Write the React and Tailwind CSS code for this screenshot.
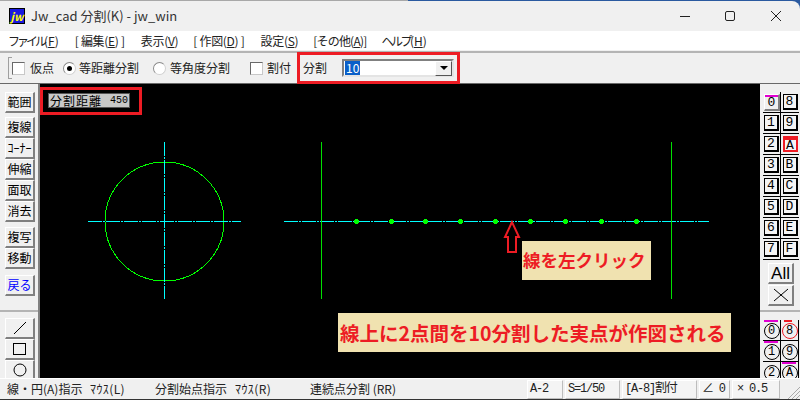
const JP = { fontFamily: '"Noto Sans CJK JP", sans-serif' }
const MONO = { fontFamily: '"Liberation Mono", "Noto Sans CJK JP", monospace' }

// Raised face shared by the side toolbar buttons
const RAISED = 'flex items-center justify-center shrink-0 bg-[#f0f0f0] border-t border-l border-t-white border-l-white border-r-2 border-b-2 border-r-[#808080] border-b-[#808080]'

const MENU = [
  { kana: 'ファイル', open: '(', key: 'F', close: ')', cls: 'ml-2', kanaCls: 'tracking-[-3px]' },
  { open: '[ 編集(', key: 'E', close: ') ]', cls: 'ml-4 tracking-[-0.3px]' },
  { open: '表示(', key: 'V', close: ')', cls: 'ml-4 tracking-[-0.3px]' },
  { open: '[ 作図(', key: 'D', close: ') ]', cls: 'ml-[15px] tracking-[-0.3px]' },
  { open: '設定(', key: 'S', close: ')', cls: 'ml-4 tracking-[-0.3px]' },
  { open: '[その他(', key: 'A', close: ')]', cls: 'ml-[15px] tracking-[-0.8px]' },
  { kana: 'ヘルプ', open: '(', key: 'H', close: ')', cls: 'ml-[15px]', kanaCls: 'tracking-[-2.5px]' },
]

const DOTS = [356, 391, 425, 460, 495, 530, 565, 601, 636]

const KEYS = [
  ['0', '8'], ['1', '9'], ['2', 'A'], ['3', 'B'],
  ['4', 'C'], ['5', 'D'], ['6', 'E'], ['7', 'F'],
]

function SideBtn({ children, className = '' }) {
  return <div className={`${RAISED} w-[30px] h-[21px] text-[12px] leading-none whitespace-nowrap ${className}`}>{children}</div>
}

function Check({ className = '' }) {
  return <span className={`w-[13px] h-[13px] bg-white border border-t-[#696969] border-l-[#696969] border-r-[#c8c8c8] border-b-[#c8c8c8] ${className}`} />
}

function Radio({ on, className = '' }) {
  return (
    <span className={`w-[13px] h-[13px] rounded-full bg-white border border-t-[#8a8a8a] border-l-[#8a8a8a] border-r-[#d0d0d0] border-b-[#d0d0d0] flex items-center justify-center ${className}`}>
      {on && <span className="w-[5px] h-[5px] rounded-full bg-black" />}
    </span>
  )
}

function Key({ label, first, hot }) {
  if (first) {
    return (
      <div className="w-[18px] h-[21px] pl-px pt-[2px] border-r border-b border-black">
        <div className={`${RAISED} relative w-[16px] h-[17px] text-[13px] leading-none`} style={MONO}>
          <span className="absolute left-0 right-0 top-0 h-[2px] bg-[#e000d0]" />
          {label}
        </div>
      </div>
    )
  }
  return (
    <div className={`w-[18px] h-[21px] flex items-center justify-center border-b border-black ${label.match(/[0-7]/) ? 'border-r' : ''}`}>
      <div className={`w-[15px] h-[16px] flex items-center justify-center text-[13px] leading-none bg-[#f4f4f4] text-black ${hot ? 'border-2 border-t-4 border-[#ed1c24] text-[12px]' : 'border border-r-2 border-b-2 border-black'}`} style={MONO}>
        {label}
      </div>
    </div>
  )
}

function CircleKey({ label, magenta, red }) {
  return (
    <div className="relative w-[18px] h-[21px] flex items-center justify-center border-b border-r border-black bg-[#f0f0f0]">
      {magenta && <span className="absolute left-[1px] right-[2px] top-0 h-[2px] bg-[#e000d0]" />}
      {red && <span className="absolute left-[3px] w-[8px] top-0 h-[2px] bg-[#ed1c24]" />}
      <span className={`w-[16px] h-[16px] mt-[2px] rounded-full border flex items-center justify-center text-[12px] leading-none ${red ? 'border-[#ed1c24]' : 'border-black'}`} style={MONO}>
        {label}
      </span>
    </div>
  )
}

function StatusCell({ children, className = '' }) {
  return <div className={`h-[19px] flex items-center pl-[2px] border-t border-l border-white border-r border-r-[#bdbdbd] border-b border-b-[#bdbdbd] bg-[#f4f4f4] text-[12px] tracking-[-1.2px] ${className}`} style={MONO}>{children}</div>
}

function Drawing() {
  return (
    <svg className="absolute inset-0" width="720" height="294" viewBox="40 84 720 294" shapeRendering="crispEdges" fill="none">
      {/* circle with its two centre lines */}
      <circle cx="164.5" cy="221.5" r="59.5" stroke="#00ff00" />
      <path d="M88 221.5H241" stroke="#00ffff" strokeDasharray="14 1 2 1" />
      <path d="M164.5 142V299" stroke="#00ffff" strokeDasharray="14 1 2 1" />
      {/* divided line */}
      <path d="M284 221.5H709" stroke="#00ffff" strokeDasharray="14 1 2 1" />
      <path d="M321.5 142V299M671.5 142V299" stroke="#00e000" />
      {DOTS.map((x) => (
        <path key={x} d={`M${x - 1} 219h3v1h1v3h-1v1h-3v-1h-1v-3h1z`} fill="#00ff00" />
      ))}
      {/* arrow pointing at the line */}
      <path d="M512 222L505 237H508V252H516V237H519Z" stroke="#ed1c24" strokeWidth="2" shapeRendering="auto" />
    </svg>
  )
}

export default function App() {
  return (
    <div className="w-[800px] h-[400px] overflow-hidden bg-[#2a5aa0] text-[#1a1a1a]" style={JP}>
      <div className="w-[408px] h-px bg-[#a8a8a8]" />
      <div className="h-[398px] flex flex-col bg-[#f0f0f0] rounded-tr-[8px] overflow-hidden">
        {/* title bar */}
        <div className="h-[30px] flex items-center shrink-0">
          <div className="ml-[9px] w-[16px] h-[16px] bg-[#1a1ae0] border border-black flex items-center justify-center text-[#ffff00] text-[11px] font-bold italic leading-none">jw</div>
          <span className="ml-[6px] text-[13px] text-[#333]">Jw_cad 分割(K) - jw_win</span>
          <svg className="ml-auto mr-[14px]" width="106" height="12" viewBox="0 0 106 12" fill="none" stroke="#222">
            <path d="M0 6.5H10" />
            <rect x="45.5" y="1.5" width="9" height="9" rx="1.5" />
            <path d="M91 1L101 11M101 1L91 11" />
          </svg>
        </div>

        {/* menu */}
        <div className="h-[19px] bg-white flex items-center text-[12px] text-[#222] shrink-0 whitespace-nowrap">
          {MENU.map((m) => (
            <span key={m.key} className={m.cls}>
              {m.kana && <span className={m.kanaCls}>{m.kana}</span>}
              {m.open}<span className="underline">{m.key}</span>{m.close}
            </span>
          ))}
        </div>

        {/* option toolbar */}
        <div className="relative mt-[1px] h-[33px] border-t-2 border-[#b4b4b4] border-b border-b-[#696969] flex items-center text-[12px] text-[#222] shrink-0 whitespace-nowrap">
          <span className="ml-[8px] w-[4px] h-[22px] border-l border-t border-b border-[#a0a0a0]" />
          <Check />
          <span className="ml-[5px]">仮点</span>
          <Radio on className="ml-[9px]" />
          <span className="ml-[3px]">等距離分割</span>
          <Radio className="ml-[14px]" />
          <span className="ml-[4px]">等角度分割</span>
          <Check className="ml-[20px]" />
          <span className="ml-[4px]">割付</span>
          <span className="ml-[12px]">分割</span>
          <div className="ml-[15px] w-[112px] h-[18px] bg-white border-2 border-t-[#808080] border-l-[#808080] border-r-[#e4e4e4] border-b-[#e4e4e4] flex items-center">
            <span className="ml-[1px] h-[14px] px-px bg-[#0a5fc8] text-white text-[12px] leading-[14px]">10</span>
            <span className="ml-auto w-[17px] h-[15px] bg-[#f0f0f0] border border-t-white border-l-white border-r-[#555] border-b-[#555] flex items-center justify-center">
              <span className="w-0 h-0 border-l-[4px] border-r-[4px] border-t-[4px] border-l-transparent border-r-transparent border-t-black" />
            </span>
          </div>
          <div className="absolute left-[297px] -top-px w-[163px] h-[32px] border-[3px] border-[#ed1c24]" />
        </div>

        <div className="flex-1 flex min-h-0">
          {/* left tools */}
          <div className="w-[40px] shrink-0 flex flex-col items-start pl-[5px] pt-[8px] border-r-2 border-[#808080] overflow-hidden text-black">
            <SideBtn>範囲</SideBtn>
            <SideBtn className="mt-[4px]">複線</SideBtn>
            <SideBtn className="text-[10px]">ｺｰﾅｰ</SideBtn>
            <SideBtn>伸縮</SideBtn>
            <SideBtn>面取</SideBtn>
            <SideBtn>消去</SideBtn>
            <SideBtn className="mt-[5px]">複写</SideBtn>
            <SideBtn>移動</SideBtn>
            <SideBtn className="mt-[6px] text-[#0000ff]">戻る</SideBtn>
            <div className="w-[40px] -ml-[5px] mt-[14px] shrink-0 border-t-2 border-[#b4b4b4]" />
            <SideBtn className="mt-[6px]">
              <svg width="14" height="14" viewBox="0 0 14 14" stroke="#000" fill="none"><path d="M1 13L13 1" /></svg>
            </SideBtn>
            <SideBtn>
              <svg width="15" height="14" viewBox="0 0 15 14" stroke="#000" fill="none"><rect x="1.5" y="1.5" width="12" height="11" /></svg>
            </SideBtn>
            <SideBtn>
              <svg width="14" height="14" viewBox="0 0 14 14" stroke="#000" fill="none"><circle cx="7" cy="7" r="6" /></svg>
            </SideBtn>
          </div>

          {/* drawing area */}
          <div className="relative w-[720px] bg-black shrink-0 overflow-hidden">
            <Drawing />
            <div className="absolute left-[8px] top-[9px] w-[82px] h-[15px] bg-[#c8c8c8] border border-[#555] flex items-center justify-between pl-[1px] pr-[1px] text-[12px] leading-none text-black whitespace-nowrap">
              <span className="tracking-[1px]">分割距離</span>
              <span className="text-[10px]" style={MONO}>450</span>
            </div>
            <div className="absolute left-0 top-[3px] w-[102px] h-[28px] border-[3px] border-[#ed1c24]" />
            <div className="absolute left-[482px] top-[157px] w-[129px] h-[39px] bg-[#f0e2b0] flex items-center pl-[1px] text-[17.5px] font-bold text-[#ed1c24] whitespace-nowrap">線を左クリック</div>
            <div className="absolute left-[298px] top-[229px] w-[393px] h-[39px] bg-[#f0e2b0] flex items-center pl-[2px] text-[19.5px] font-bold text-[#ed1c24] whitespace-nowrap">線上に2点間を10分割した実点が作図される</div>
          </div>

          {/* layer keys */}
          <div className="flex-1 min-w-0 flex flex-col pl-[3px] pt-[8px] overflow-hidden text-black">
            <div className="grid grid-cols-[18px_18px]">
              {KEYS.map(([a, b], i) => (
                <div key={a} className="contents">
                  <Key label={a} first={i === 0} />
                  <Key label={b} hot={b === 'A'} />
                </div>
              ))}
            </div>
            <div className={`${RAISED} ml-[5px] mt-[3px] w-[26px] h-[21px] text-[17px] leading-none`} style={{ fontFamily: '"Liberation Sans", sans-serif' }}>All</div>
            <div className={`${RAISED} ml-[5px] mt-[1px] w-[26px] h-[21px]`}>
              <svg width="16" height="14" viewBox="0 0 16 14" stroke="#000" fill="none"><path d="M1 1L15 13M15 1L1 13" /></svg>
            </div>
            <div className="w-[40px] -ml-[3px] mt-[4px] shrink-0 border-t-2 border-[#b4b4b4]" />
            <div className="mt-[8px] grid grid-cols-[18px_18px]">
              <CircleKey label="0" magenta />
              <CircleKey label="8" red />
              <CircleKey label="1" magenta />
              <CircleKey label="9" />
              <CircleKey label="2" />
              <CircleKey label="A" magenta />
            </div>
          </div>
        </div>

        {/* status bar */}
        <div className="h-[21px] flex items-center shrink-0 text-[12px] text-[#222] whitespace-nowrap border-t border-white">
          <span className="ml-[7px] w-[83px]">線・円(A)指示</span>
          <span className="w-[65px] tracking-[0.4px]">ﾏｳｽ(L)</span>
          <span className="w-[80px]">分割始点指示</span>
          <span className="w-[75px] tracking-[0.4px]">ﾏｳｽ(R)</span>
          <span className="w-[217px]">連続点分割 (RR)</span>
          <StatusCell className="w-[36px]">A-2</StatusCell>
          <StatusCell className="ml-[2px] w-[55px]">S=1/50</StatusCell>
          <StatusCell className="ml-[2px] w-[75px]">[A-8]割付</StatusCell>
          <StatusCell className="ml-[2px] w-[31px]">∠ 0</StatusCell>
          <StatusCell className="ml-[2px] w-[48px] pl-[4px]">× 0.5</StatusCell>
          <svg className="ml-auto mt-[6px]" width="14" height="14" viewBox="0 0 14 14" stroke="#a8a8a8" fill="none"><path d="M2 14L14 2M6 14L14 6M10 14L14 10" /></svg>
        </div>
      </div>
      <div className="h-px bg-[#333]" />
    </div>
  )
}
